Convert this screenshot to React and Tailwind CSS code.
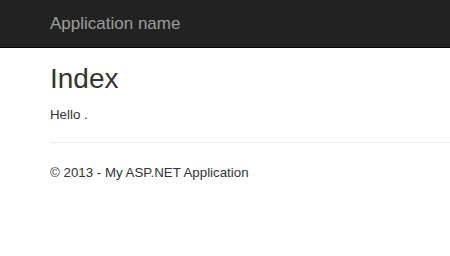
import React from 'react'

const font = { fontFamily: '"Liberation Sans", Arial, sans-serif' }

export default function App() {
  return (
    <div className="min-h-screen bg-white text-[#333]" style={font}>
      <div className="h-[48px] bg-[#222] border-b border-[#080808] flex items-center px-[50px]">
        <span className="text-[17px] leading-[20px] text-[#9d9d9d]">Application name</span>
      </div>
      <div className="pl-[50px]">
        <h1 className="mt-[15px] text-[28px] leading-[31px] font-normal">Index</h1>
        <p className="mt-[11px] text-[13.3px] leading-[19px]">Hello .</p>
        <hr className="mt-[18px] border-t border-[#eee]" />
        <footer className="mt-[20px] text-[13.3px] leading-[19px]">
          <p>© 2013 - My ASP.NET Application</p>
        </footer>
      </div>
    </div>
  )
}
